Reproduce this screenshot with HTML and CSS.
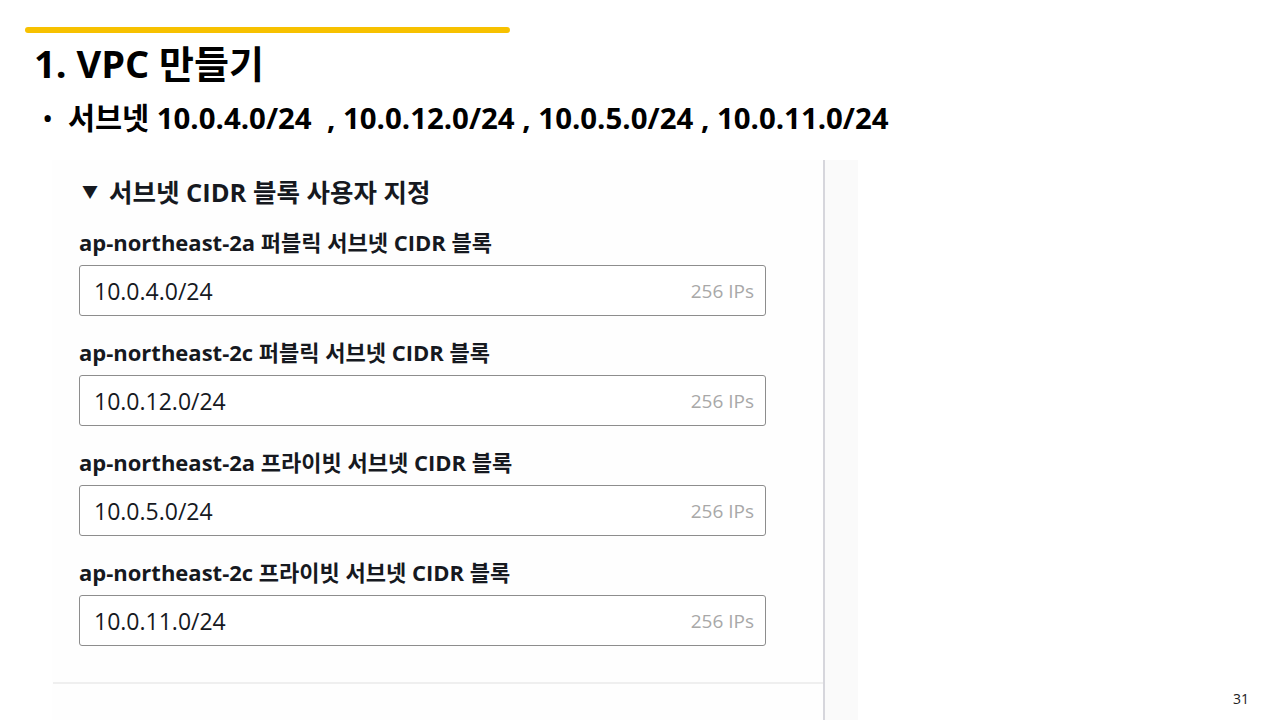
FILE: index.html
```html
<!DOCTYPE html>
<html lang="ko">
<head>
<meta charset="utf-8">
<link rel="stylesheet" href="styles.css">
</head>
<body>
<div class="slide">
  <div class="accent"></div>
  <h1 class="title">1. VPC 만들기</h1>
  <ul class="bullets">
    <li>서브넷 10.0.4.0/24 &nbsp;, 10.0.12.0/24 , 10.0.5.0/24 , 10.0.11.0/24</li>
  </ul>
  <div class="shot">
    <div class="main">
      <div class="section-head"><span class="caret">▼</span>서브넷 CIDR 블록 사용자 지정</div>
      <div class="field">
        <div class="label">ap-northeast-2a 퍼블릭 서브넷 CIDR 블록</div>
        <div class="input"><span class="val">10.0.4.0/24</span><span class="hint">256 IPs</span></div>
      </div>
      <div class="field">
        <div class="label">ap-northeast-2c 퍼블릭 서브넷 CIDR 블록</div>
        <div class="input"><span class="val">10.0.12.0/24</span><span class="hint">256 IPs</span></div>
      </div>
      <div class="field">
        <div class="label">ap-northeast-2a 프라이빗 서브넷 CIDR 블록</div>
        <div class="input"><span class="val">10.0.5.0/24</span><span class="hint">256 IPs</span></div>
      </div>
      <div class="field">
        <div class="label">ap-northeast-2c 프라이빗 서브넷 CIDR 블록</div>
        <div class="input"><span class="val">10.0.11.0/24</span><span class="hint">256 IPs</span></div>
      </div>
      <div class="rule"></div>
    </div>
    <div class="side"></div>
  </div>
  <div class="page-num">31</div>
</div>
</body>
</html>
```
FILE: styles.css
```css
* { box-sizing: border-box; }
html, body { margin: 0; padding: 0; background: #ffffff; }
body {
  font-family: "Open Sans", "Noto Sans CJK KR", sans-serif;
  color: #000;
}
.slide {
  position: relative;
  width: 1280px;
  height: 720px;
  overflow: hidden;
  display: flex;
  flex-direction: column;
}
.accent {
  margin: 27px 0 0 25px;
  width: 485px;
  height: 6px;
  border-radius: 3px;
  background: #f7c100;
}
.title {
  margin: 6px 0 0 34px;
  font-size: 38px;
  line-height: 48px;
  font-weight: 700;
  letter-spacing: 0;
}
.bullets {
  list-style: none;
  margin: 12px 0 0 0;
  padding: 0 0 0 42px;
}
.bullets li {
  font-size: 29.4px;
  line-height: 38px;
  font-weight: 700;
  position: relative;
  padding-left: 26px;
}
.bullets li::before {
  content: "•";
  position: absolute;
  left: 0;
  top: 0;
  font-size: 30px;
  font-weight: 400;
}
.shot {
  margin: 23px 0 0 52px;
  width: 806px;
  flex: 1;
  display: flex;
  background: #fdfdfd;
}
.main {
  width: 773px;
  padding: 15px 0 0 27px;
  border-right: 2px solid #d6d6dc;
  display: flex;
  flex-direction: column;
  background: #fefefe;
}
.side {
  flex: 1;
  background: #fafafa;
}
.section-head {
  font-size: 25.5px;
  line-height: 34px;
  font-weight: 700;
  color: #16191f;
  padding-left: 3px;
  display: flex;
  align-items: center;
}
.caret {
  font-size: 16px;
  margin-right: 11px;
}
.field {
  margin-top: 18px;
}
.field + .field { margin-top: 21px; }
.label {
  font-size: 22px;
  line-height: 30px;
  font-weight: 700;
  color: #16191f;
}
.input {
  margin-top: 8px;
  width: 687px;
  height: 51px;
  border: 1.5px solid #8d8d8d;
  border-radius: 3px;
  background: #fff;
  display: flex;
  align-items: center;
  justify-content: space-between;
  padding: 0 11px 0 14px;
}
.val {
  font-size: 23px;
  color: #16191f;
}
.hint {
  font-size: 19px;
  color: #a8a8a8;
}
.rule {
  margin: 36px 0 0 -26px;
  height: 2px;
  background: #efefef;
}
.page-num {
  position: absolute;
  right: 31px;
  bottom: 12px;
  font-size: 14px;
  color: #222;
}
```
